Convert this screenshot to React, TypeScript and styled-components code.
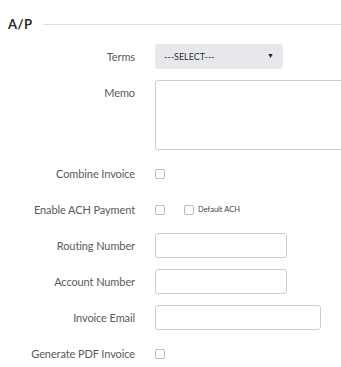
import React from "react";
import styled, { createGlobalStyle } from "styled-components";

const GlobalStyle = createGlobalStyle`
  html, body {
    margin: 0;
    padding: 0;
    background: #fff;
  }
  body {
    font-family: Lato, "Open Sans", sans-serif;
    color: #555;
  }
`;

const Section = styled.div`
  width: 341px;
  height: 367px;
  overflow: hidden;
  padding-top: 14px;
  box-sizing: border-box;
`;

const Heading = styled.div`
  display: flex;
  align-items: center;
  height: 20px;
  margin-bottom: 10px;
  padding-left: 8px;
`;

const HeadingText = styled.span`
  font-size: 13px;
  font-weight: 700;
  color: #2a2a2a;
  letter-spacing: 0.5px;
  margin-right: 10px;
`;

const HeadingRule = styled.div`
  flex: 1;
  height: 1px;
  background: #cfe2f7;
`;

const Row = styled.div<{ $top?: boolean }>`
  display: flex;
  align-items: ${(p) => (p.$top ? "flex-start" : "center")};
  min-height: 25px;
  margin-bottom: 11px;
`;

const Label = styled.label<{ $top?: boolean }>`
  width: 135px;
  flex-shrink: 0;
  text-align: right;
  font-size: 11px;
  letter-spacing: -0.1px;
  line-height: 25px;
  color: #5a5a5a;
  margin-right: 20px;
  margin-top: ${(p) => (p.$top ? "0" : "0")};
  white-space: nowrap;
`;

const Select = styled.div`
  width: 128px;
  height: 25px;
  box-sizing: border-box;
  background: #e6e8ec;
  border-radius: 3px;
  display: flex;
  align-items: center;
  justify-content: space-between;
  padding: 0 9px;
  font-size: 9px;
  color: #333;
`;

const Caret = styled.span`
  font-size: 7px;
  color: #222;
  margin-top: -4px;
`;

const TextArea = styled.div`
  width: 200px;
  height: 70px;
  box-sizing: border-box;
  border: 1px solid #ccc;
  border-radius: 3px;
  flex-shrink: 0;
`;

const Input = styled.div<{ $w: number }>`
  width: ${(p) => p.$w}px;
  height: 25px;
  box-sizing: border-box;
  border: 1px solid #ccc;
  border-radius: 3px;
`;

const Check = styled.span`
  display: inline-block;
  width: 10px;
  height: 10px;
  box-sizing: border-box;
  border: 1px solid #bbb;
  border-radius: 2px;
  flex-shrink: 0;
`;

const SubOption = styled.span`
  display: inline-flex;
  align-items: center;
  margin-left: 19px;
  font-size: 7.5px;
  color: #444;
  gap: 4px;
`;

export default function App() {
  return (
    <>
      <GlobalStyle />
      <Section>
        <Heading>
          <HeadingText>A/P</HeadingText>
          <HeadingRule />
        </Heading>
        <Row>
          <Label>Terms</Label>
          <Select>
            <span>---SELECT---</span>
            <Caret>▼</Caret>
          </Select>
        </Row>
        <Row $top>
          <Label $top>Memo</Label>
          <TextArea />
        </Row>
        <Row>
          <Label>Combine Invoice</Label>
          <Check />
        </Row>
        <Row>
          <Label>Enable ACH Payment</Label>
          <Check />
          <SubOption>
            <Check />
            Default ACH
          </SubOption>
        </Row>
        <Row>
          <Label>Routing Number</Label>
          <Input $w={132} />
        </Row>
        <Row>
          <Label>Account Number</Label>
          <Input $w={132} />
        </Row>
        <Row>
          <Label>Invoice Email</Label>
          <Input $w={166} />
        </Row>
        <Row>
          <Label>Generate PDF Invoice</Label>
          <Check />
        </Row>
      </Section>
    </>
  );
}
